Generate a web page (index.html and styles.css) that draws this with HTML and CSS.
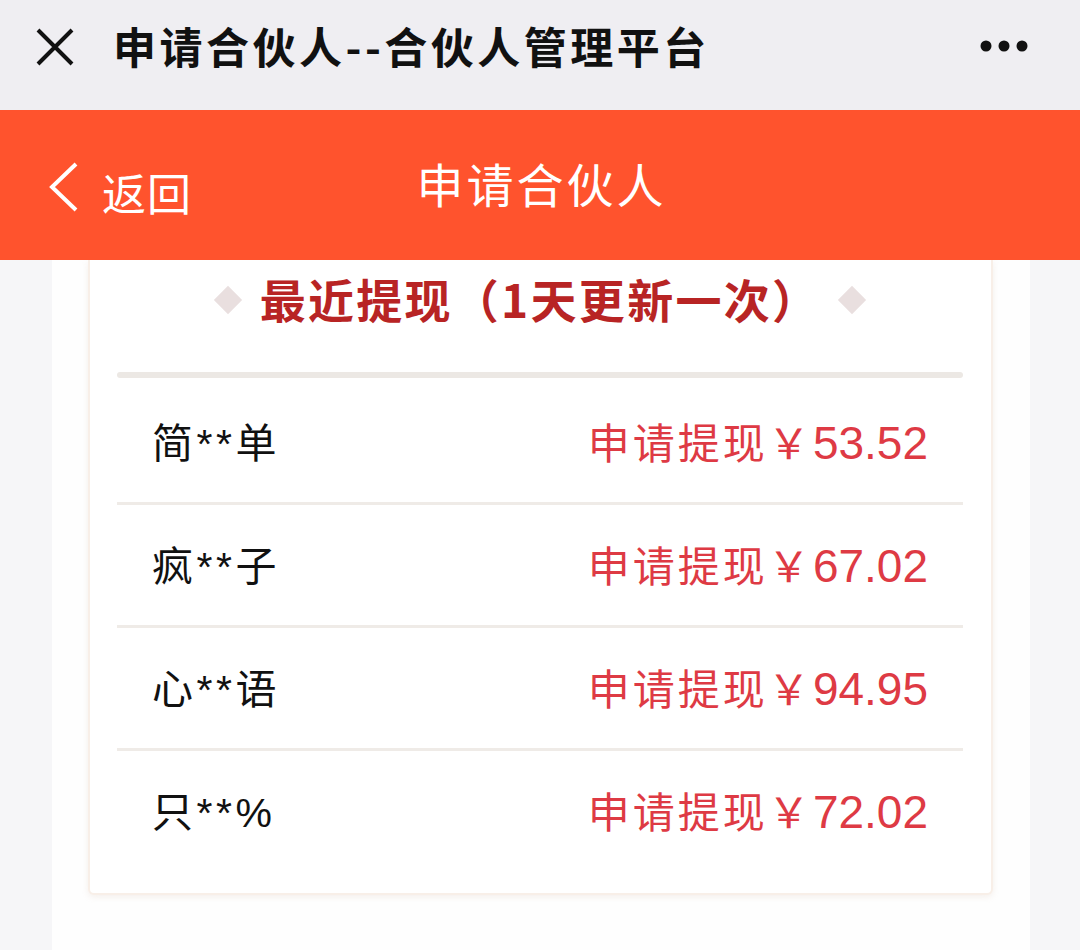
FILE: index.html
```html
<!DOCTYPE html>
<html lang="zh-CN">
<head>
<meta charset="utf-8">
<title>申请合伙人--合伙人管理平台</title>
<link rel="stylesheet" href="styles.css">
</head>
<body>
<div class="topbar">
  <svg class="close" width="40" height="40" viewBox="0 0 40 40"><path d="M3 3 L37 37 M37 3 L3 37" stroke="#111" stroke-width="4" fill="none"/></svg>
  <div class="toptitle">申请合伙人--合伙人管理平台</div>
  <svg class="more" width="48" height="12" viewBox="0 0 48 12"><circle cx="6" cy="6" r="5.5" fill="#111"/><circle cx="24" cy="6" r="5.5" fill="#111"/><circle cx="42" cy="6" r="5.5" fill="#111"/></svg>
</div>
<div class="navbar">
  <div class="back">
    <svg class="chev" width="32" height="50" viewBox="0 0 32 50"><path d="M28 2 L4 25 L28 48" stroke="#fff" stroke-width="4" fill="none" stroke-linejoin="miter"/></svg>
    <span class="backtext">返回</span>
  </div>
  <div class="navtitle">申请合伙人</div>
</div>
<div class="page">
  <div class="wrap">
    <div class="card">
      <div class="heading">
        <span class="diamond"></span>
        <span class="htext">最近提现（1天更新一次）</span>
        <span class="diamond"></span>
      </div>
      <div class="thick"></div>
      <div class="row"><span class="name">简**单</span><span class="amt">申请提现￥<span class="num">53.52</span></span></div>
      <div class="row"><span class="name">疯**子</span><span class="amt">申请提现￥<span class="num">67.02</span></span></div>
      <div class="row"><span class="name">心**语</span><span class="amt">申请提现￥<span class="num">94.95</span></span></div>
      <div class="row last"><span class="name">只**%</span><span class="amt">申请提现￥<span class="num">72.02</span></span></div>
    </div>
  </div>
</div>
</body>
</html>
```

FILE: styles.css
```css
* { box-sizing: border-box; }
html, body { margin: 0; padding: 0; }
body {
  width: 1080px;
  height: 950px;
  overflow: hidden;
  background: #f6f6f8;
  font-family: "Liberation Sans", "Noto Sans CJK SC", sans-serif;
}
.topbar {
  height: 110px;
  background: #efeef2;
  display: flex;
  align-items: center;
  padding: 0 52px 0 35px;
}
.close { flex: none; margin-top: -16px; }
.toptitle {
  margin-left: 38px;
  font-family: "Noto Sans CJK SC", sans-serif;
  font-weight: 700;
  font-size: 43px;
  color: #111;
  letter-spacing: 3.5px;
  margin-top: -20px;
  flex: 1;
}
.more { flex: none; margin-top: -18px; }
.navbar {
  height: 150px;
  background: #ff532d;
  position: relative;
  display: flex;
  align-items: center;
  justify-content: center;
  color: #fff;
}
.back {
  position: absolute;
  left: 48px;
  top: 0;
  height: 150px;
  display: flex;
  align-items: center;
  padding-top: 8px;
}
.chev { margin-top: -4px; }
.backtext {
  margin-left: 22px;
  font-family: "Noto Sans CJK SC", sans-serif;
  font-size: 44px;
  letter-spacing: 1px;
  margin-top: 6px;
}
.navtitle {
  font-family: "Noto Sans CJK SC", sans-serif;
  font-size: 47px;
  letter-spacing: 3px;
  margin-top: -6px;
  padding-left: 3px;
}
.page {
  height: 690px;
  padding: 0 50px 0 52px;
}
.wrap {
  background: #fefefe;
  height: 100%;
  padding: 0 37px 0 36px;
}
.card {
  background: #fff;
  border: 2px solid #f8efe8;
  border-top: none;
  border-radius: 0 0 6px 6px;
  box-shadow: 0 2px 6px rgba(200, 170, 150, 0.18);
  padding: 0 28px 22px 27px;
}
.heading {
  display: flex;
  align-items: center;
  justify-content: center;
  height: 76px;
}
.htext {
  font-family: "Noto Sans CJK SC", sans-serif;
  font-weight: 700;
  font-size: 46px;
  color: #b82424;
  margin: 0 22px;
  letter-spacing: 2.3px;
  line-height: 76px;
}
.diamond {
  width: 20px;
  height: 20px;
  background: #e9dfdf;
  transform: rotate(45deg);
  margin-top: 4px;
}
.thick {
  margin-top: 36px;
  margin-bottom: 4px;
  height: 6px;
  background: #ece8e4;
  border-radius: 3px;
}
.row {
  height: 123px;
  display: flex;
  align-items: center;
  justify-content: space-between;
  padding: 0 35px 4px 35px;
  border-bottom: 3px solid #efebe7;
}
.row.last { border-bottom: none; height: 120px; }
.name {
  font-size: 41px;
  letter-spacing: 3.5px;
  color: #111;
}
.amt {
  font-family: "Noto Sans CJK SC", sans-serif;
  font-size: 42px;
  letter-spacing: 3px;
  color: #de3a44;
  display: flex;
  align-items: baseline;
}
.num {
  font-family: "Liberation Sans", sans-serif;
  font-size: 46px;
  letter-spacing: 0;
  margin-left: 0;
}
```
